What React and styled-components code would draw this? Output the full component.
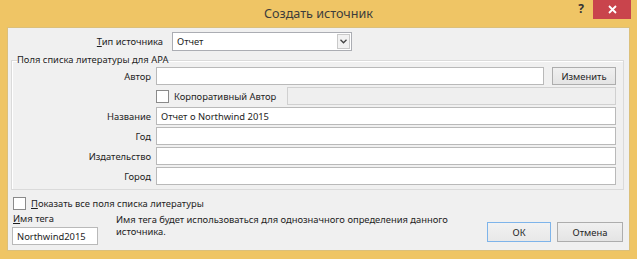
import React from 'react';
import styled, { createGlobalStyle } from 'styled-components';

const Global = createGlobalStyle`
  html, body { margin: 0; padding: 0; }
  body { background: #efc565; }
`;

const Frame = styled.div`
  width: 637px;
  height: 259px;
  box-sizing: border-box;
  background: #efc565;
  display: flex;
  flex-direction: column;
  font-family: "Noto Sans", "Open Sans", sans-serif;
  font-size: 9.4px;
  color: #1e1e1e;
`;

const TitleBar = styled.div`
  height: 27px;
  flex: none;
  display: grid;
  grid-template-columns: 1fr auto 1fr;
  align-items: start;
`;

const Title = styled.div`
  grid-column: 2;
  font-size: 12.6px;
  line-height: 27px;
  color: #3c3c3c;
`;

const Controls = styled.div`
  grid-column: 3;
  justify-self: end;
  display: flex;
  align-items: flex-start;
  padding-right: 6px;
`;

const Help = styled.span`
  font-size: 12px;
  font-weight: bold;
  color: #333;
  line-height: 18px;
  margin-right: 9px;
`;

const Close = styled.div`
  width: 38px;
  height: 19px;
  background: #c9444c;
  display: flex;
  align-items: center;
  justify-content: center;
`;

const Client = styled.div`
  flex: 1;
  margin: 0 7px 8px 7px;
  background: #f0f0f0;
  border: 1px solid #dcc07a;
  padding: 4px 0 0 0;
  display: flex;
  flex-direction: column;
`;

const TypeRow = styled.div`
  display: grid;
  grid-template-columns: 155px 180px;
  column-gap: 9px;
  align-items: center;
`;

const Label = styled.label`
  text-align: right;
  white-space: nowrap;
`;

const Select = styled.div`
  height: 19px;
  box-sizing: border-box;
  background: #fff;
  border: 1px solid #abadb3;
  display: flex;
  align-items: center;
  padding-left: 4px;
  justify-content: space-between;
`;

const Arrow = styled.div`
  width: 13px;
  height: 15px;
  margin-right: 1px;
  box-sizing: border-box;
  border: 1px solid #c9c9c9;
  background: #f2f2f2;
  display: flex;
  align-items: center;
  justify-content: center;
`;

const Group = styled.fieldset`
  margin: 2px 5px 0 3px;
  padding: 0 7px 4px 0;
  border: 1px solid #dadada;
  box-shadow: inset 1px 1px 0 #fff;
  display: grid;
  grid-template-columns: 139px 1fr;
  column-gap: 5px;
  row-gap: 2px;
  align-items: center;
  legend {
    padding: 0;
    margin-left: 5px;
    line-height: 14px;
  }
`;

const Field = styled.div`
  height: 18px;
  box-sizing: border-box;
  background: ${(p) => (p.disabled ? '#efefef' : '#fff')};
  border: 1px solid ${(p) => (p.disabled ? '#d0d0d0' : '#b9b9b9')};
  padding-left: 4px;
  display: flex;
  align-items: center;
  white-space: nowrap;
  overflow: hidden;
  width: ${(p) => p.w || 'auto'};
`;

const Line = styled.div`
  display: flex;
  align-items: center;
  gap: ${(p) => p.gap || 8}px;
  min-width: 0;
  > :first-child {
    flex: ${(p) => (p.grow ? 1 : 'none')};
  }
`;

const Check = styled.span`
  width: 11px;
  height: 11px;
  background: #fff;
  border: 1px solid #8a8a8a;
  flex: none;
`;

const CheckLabel = styled.span`
  display: flex;
  align-items: center;
  gap: 5px;
  white-space: nowrap;
`;

const Button = styled.div`
  width: ${(p) => p.w}px;
  height: ${(p) => p.h || 18}px;
  box-sizing: border-box;
  border: 1px solid ${(p) => (p.primary ? '#7eb4ea' : '#adadad')};
  background: ${(p) => (p.primary ? 'linear-gradient(#f2f2f2, #e8e8e8)' : 'linear-gradient(#f0f0f0, #e4e4e4)')};
  display: flex;
  align-items: center;
  justify-content: center;
  flex: none;
`;

const Footer = styled.div`
  padding: 4px 6px 0 4px;
  display: grid;
  grid-template-columns: 104px 1fr auto;
  grid-template-rows: 18px auto;
`;

const TagCol = styled.div`
  display: flex;
  flex-direction: column;
  gap: 2px;
`;

const Hint = styled.div`
  line-height: 12px;
  padding-top: 2px;
  width: 350px;
`;

const Actions = styled.div`
  display: flex;
  gap: 6px;
  align-self: end;
  padding: 0 0 3px 2px;
`;

const U = styled.u`
  text-decoration-thickness: 1px;
`;

export default function App() {
  return (
    <Frame>
      <Global />
      <TitleBar>
        <Title>Создать источник</Title>
        <Controls>
          <Help>?</Help>
          <Close>
            <svg width="9" height="9" viewBox="0 0 9 9">
              <path d="M1 1 L8 8 M8 1 L1 8" stroke="#fff" strokeWidth="1.8" />
            </svg>
          </Close>
        </Controls>
      </TitleBar>
      <Client>
        <TypeRow>
          <Label><U>Т</U>ип источника</Label>
          <Select>
            <span>Отчет</span>
            <Arrow>
              <svg width="7" height="5" viewBox="0 0 7 5">
                <path d="M0.5 0.8 L3.5 3.8 L6.5 0.8" fill="none" stroke="#444" strokeWidth="1.3" />
              </svg>
            </Arrow>
          </Select>
        </TypeRow>
        <Group>
          <legend>Поля списка литературы для APA</legend>
          <Label>Автор</Label>
          <Line grow>
            <Field />
            <Button w={64}>Изменить</Button>
          </Line>
          <span />
          <Line grow={false} gap={11}>
            <CheckLabel><Check />Корпоративный Автор</CheckLabel>
            <Field disabled style={{ flex: 1 }} />
          </Line>
          <Label>Название</Label>
          <Field>Отчет о Northwind 2015</Field>
          <Label>Год</Label>
          <Field />
          <Label>Издательство</Label>
          <Field />
          <Label>Город</Label>
          <Field />
        </Group>
        <Footer>
          <CheckLabel style={{ gridColumn: '1 / 4', paddingLeft: 1 }}>
            <Check /><span><U>П</U>оказать все поля списка литературы</span>
          </CheckLabel>
          <TagCol>
            <span style={{ paddingLeft: 1 }}><U>И</U>мя тега</span>
            <Field w="86px">Northwind2015</Field>
          </TagCol>
          <Hint>Имя тега будет использоваться для однозначного определения данного источника.</Hint>
          <Actions>
            <Button w={64} h={20} primary>ОК</Button>
            <Button w={66} h={20}>Отмена</Button>
          </Actions>
        </Footer>
      </Client>
    </Frame>
  );
}
